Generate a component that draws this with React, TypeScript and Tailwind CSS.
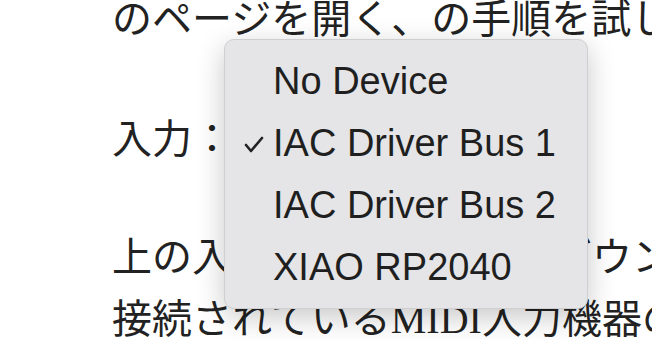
import React from 'react';

const devices = ['No Device', 'IAC Driver Bus 1', 'IAC Driver Bus 2', 'XIAO RP2040'];

export default function App() {
  return (
    <div className="relative w-[652px] h-[340px] overflow-hidden bg-white text-[#222]">
      <div
        className="pl-[112px] text-[40px] leading-[62px] whitespace-nowrap -mt-[11px]"
        style={{ fontFamily: '"Liberation Serif", "Noto Sans CJK JP", serif' }}
      >
        <p>のページを開く、の手順を試してください。</p>
        <p className="mt-[58px]">入力：</p>
        <p className="mt-[56px]">
          上の入力セレクトのプルダウンに、
          <br />
          接続されているMIDI入力機器の名前
        </p>
      </div>

      <div
        className="absolute left-[224px] top-[39px] w-[364px] rounded-[10px] border border-[#cfcfd1] bg-[#e5e5e7] py-[10px] shadow-[0_8px_28px_rgba(0,0,0,0.22)]"
        style={{ fontFamily: '"Liberation Sans", Arial, sans-serif' }}
      >
        {devices.map((d, i) => (
          <div key={d} className="relative flex h-[62px] items-center pl-[48px] text-[38px] text-[#1f1f1f]">
            {i === 1 && (
              <svg className="absolute left-[19px] top-[24px]" width="20" height="18" viewBox="0 0 20 18">
                <polyline points="2,9 7,15 18,2" fill="none" stroke="#222" strokeWidth="2.6" strokeLinecap="round" strokeLinejoin="round" />
              </svg>
            )}
            <span>{d}</span>
          </div>
        ))}
      </div>
    </div>
  );
}
